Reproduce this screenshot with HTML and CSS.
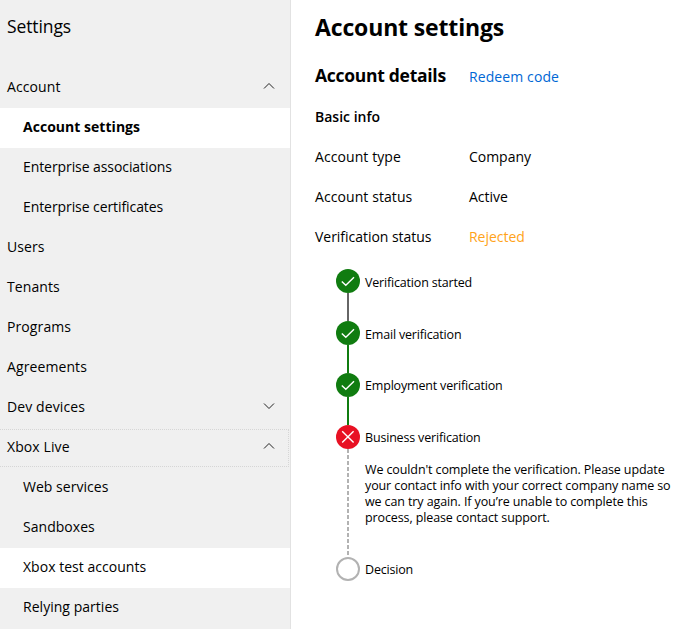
FILE: index.html
```html
<!DOCTYPE html>
<html lang="en">
<head>
<meta charset="utf-8">
<title>Account settings</title>
<link rel="stylesheet" href="styles.css">
</head>
<body>
<div class="app">
  <nav class="sidebar">
    <div class="sidebar-title">Settings</div>
    <a class="item">Account<svg class="chevron" viewBox="0 0 12 8"><path d="M1 6.5 6 1.5 11 6.5"/></svg></a>
    <a class="item sub active">Account settings</a>
    <a class="item sub">Enterprise associations</a>
    <a class="item sub">Enterprise certificates</a>
    <a class="item">Users</a>
    <a class="item">Tenants</a>
    <a class="item">Programs</a>
    <a class="item">Agreements</a>
    <a class="item">Dev devices<svg class="chevron" viewBox="0 0 12 8"><path d="M1 1.5 6 6.5 11 1.5"/></svg></a>
    <a class="item focused">Xbox Live<svg class="chevron" viewBox="0 0 12 8"><path d="M1 6.5 6 1.5 11 6.5"/></svg></a>
    <a class="item sub short">Web services</a>
    <a class="item sub short">Sandboxes</a>
    <a class="item sub short hovered">Xbox test accounts</a>
    <a class="item sub short">Relying parties</a>
  </nav>
  <main class="content">
    <h1>Account settings</h1>
    <div class="row"><h2>Account details</h2><a class="link">Redeem code</a></div>
    <h3>Basic info</h3>
    <div class="row"><span class="key">Account type</span><span>Company</span></div>
    <div class="row"><span class="key">Account status</span><span>Active</span></div>
    <div class="row"><span>Verification status</span><span class="rejected">Rejected</span></div>
    <ol class="steps">
      <li class="step">
        <div class="rail"><svg class="mark done" viewBox="0 0 24 24"><circle cx="12" cy="12" r="12"/><path d="M5.8 12.4 9.8 16.3 18 8.2"/></svg><i class="line gray"></i></div>
        <div class="label low">Verification started</div>
      </li>
      <li class="step">
        <div class="rail"><svg class="mark done" viewBox="0 0 24 24"><circle cx="12" cy="12" r="12"/><path d="M5.8 12.4 9.8 16.3 18 8.2"/></svg><i class="line"></i></div>
        <div class="label low">Email verification</div>
      </li>
      <li class="step">
        <div class="rail"><svg class="mark done" viewBox="0 0 24 24"><circle cx="12" cy="12" r="12"/><path d="M5.8 12.4 9.8 16.3 18 8.2"/></svg><i class="line"></i></div>
        <div class="label">Employment verification</div>
      </li>
      <li class="step failed">
        <div class="rail"><svg class="mark error" viewBox="0 0 24 24"><circle cx="12" cy="12" r="12"/><path d="M6.2 6.2 17.6 17.6M17.6 6.2 6.2 17.6"/></svg><i class="line dashed"></i></div>
        <div class="label">Business verification
          <p>We couldn't complete the verification. Please update<br>your contact info with your correct company name so<br>we can try again. If you’re unable to complete this<br>process, please contact support.</p>
        </div>
      </li>
      <li class="step">
        <div class="rail"><svg class="mark pending" viewBox="0 0 24 24"><circle cx="12" cy="12" r="11"/></svg></div>
        <div class="label">Decision</div>
      </li>
    </ol>
  </main>
</div>
</body>
</html>
```
FILE: styles.css
```css
* { box-sizing: border-box; }
body { margin: 0; background: #fff; color: #000; font: 14px/20px "Segoe UI", "Open Sans", "Noto Sans", sans-serif; letter-spacing: -0.08px; }
.app { display: flex; height: 629px; overflow: hidden; }
.sidebar { width: 291px; flex: none; background: #f0f0f0; border-right: 1px solid #e2e2e2; padding-top: 14px; }
.sidebar-title { height: 54px; padding-left: 7px; font-size: 17.5px; line-height: 24px; letter-spacing: -0.1px; }
.item { display: flex; align-items: center; justify-content: space-between; height: 40px; padding: 0 15px 2px 7px; letter-spacing: 0.1px; }
.sub { padding-left: 23px; letter-spacing: -0.08px; }
.short { letter-spacing: 0.03px; }
.active, .hovered { background: #fff; }
.active { font-weight: 700; letter-spacing: 0.03px; }
.focused { height: 38px; margin: 1px 1px 1px 0; padding: 0 14px 2px 7px; border: 1px dotted #d6d6d6; border-left: 0; }
.focused .chevron { margin-right: -1px; }
.chevron { width: 12px; height: 8px; margin-bottom: 3px; fill: none; stroke: #222; stroke-width: 1; }
.content { flex: 1; padding: 11px 0 0 24px; white-space: nowrap; }
h1, h2, h3 { margin: 0; }
h1 { height: 46px; font-size: 23px; line-height: 32px; letter-spacing: -0.15px; }
h2 { font-size: 17.5px; line-height: 37px; letter-spacing: -0.28px; }
h3 { height: 40px; font-size: 14px; line-height: 40px; font-weight: 600; letter-spacing: 0; }
.row { display: grid; grid-template-columns: 154px 1fr; height: 40px; line-height: 40px; letter-spacing: -0.03px; }
.key { letter-spacing: 0.08px; }
.link { color: #0067d5; letter-spacing: 0.1px; }
.rejected { color: #ffa31a; }
.steps { list-style: none; margin: 12px 0 0 21px; padding: 0; font-size: 12.5px; letter-spacing: -0.18px; }
.step { display: flex; gap: 5px; height: 52px; }
.step.failed { height: 132px; }
.rail { width: 24px; display: flex; flex-direction: column; align-items: center; }
.mark { width: 24px; height: 24px; flex: none; }
.mark path { fill: none; stroke: #fff; stroke-width: 1.4; }
.done circle { fill: #107c10; }
.error circle { fill: #e81123; }
.pending circle { fill: #fff; stroke: #b2b2b2; stroke-width: 2; }
.line { flex: 1; width: 2px; background: #107c10; }
.line.gray { background: #666; }
.line.dashed { background: repeating-linear-gradient(#b2b2b2 0 4px, #fff 4px 6px); }
.label { line-height: 26px; }
.label.low { line-height: 28px; }
.label p { margin: 11px 0 0; line-height: 16px; letter-spacing: -0.11px; }
```
